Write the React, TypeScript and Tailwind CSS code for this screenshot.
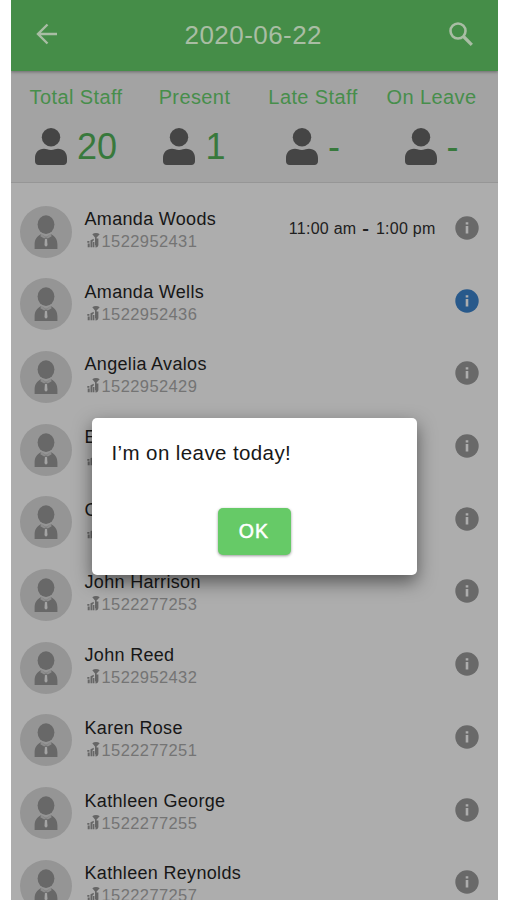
const stats = [
  { label: 'Total Staff', value: '20', cell: 'w-[131px]', gap: 'ml-[10px]' },
  { label: 'Present', value: '1', cell: 'w-[106px]', gap: 'ml-[10px]' },
  { label: 'Late Staff', value: '-', cell: 'w-[131px]', gap: 'ml-[10px]' },
  { label: 'On Leave', value: '-', cell: 'w-[106px]', gap: 'ml-[10px]' },
];

const staff = [
  { name: 'Amanda Woods', phone: '1522952431', time: true },
  { name: 'Amanda Wells', phone: '1522952436', active: true },
  { name: 'Angelia Avalos', phone: '1522952429' },
  { name: 'E', phone: '' },
  { name: 'C', phone: '' },
  { name: 'John Harrison', phone: '1522277253' },
  { name: 'John Reed', phone: '1522952432' },
  { name: 'Karen Rose', phone: '1522277251' },
  { name: 'Kathleen George', phone: '1522277255' },
  { name: 'Kathleen Reynolds', phone: '1522277257' },
];

function PersonIcon() {
  return (
    <svg width="32" height="37" viewBox="0 0 32 37" fill="#454545" className="shrink-0">
      <circle cx="16" cy="9.3" r="9.2" />
      <path d="M9 20.7C3.5 20.7 0 24.5 0 30v3.3C0 35.6 1.4 37 3.7 37h24.6c2.3 0 3.7-1.4 3.7-3.7V30c0-5.5-3.5-9.3-9-9.3-2.2 0-3.8 1.2-7 1.2s-4.8-1.2-7-1.2Z" />
    </svg>
  );
}

function Avatar() {
  return (
    <svg width="52" height="52" viewBox="0 0 52 52" className="shrink-0">
      <circle cx="26" cy="26" r="26" fill="#959595" />
      <ellipse cx="26" cy="18.6" rx="8.4" ry="9.3" fill="#686868" />
      <path d="M14.6 43v-4.5c0-5 2.4-8.200 6.400-10.200L26 31l5-2.700c4 2 6.400 5.200 6.400 10.200V43Z" fill="#686868" />
      <path d="m21.300 27.800 4.700 3.400 4.700-3.400 1 2.400-3.900 2.400-1.800-1.200-1.800 1.200-3.900-2.400Z" fill="#8d8d8d" />
      <path d="m24.900 33.200 1.100-.8 1.100.8.400 6-1.500 1.500-1.500-1.500Z" fill="#a4a4a4" />
    </svg>
  );
}

function DeviceIcon() {
  return (
    <svg width="13" height="16" viewBox="0 0 13 16" fill="#666" className="shrink-0">
      <path d="M5.300 1.200C7.300-.4 10.700-.4 12.700 1.200L9.600 4.400v1.100h1.800v6.300c0 1.600-1.100 2.600-2.900 2.800v-2L8 12V4.400Z" />
      <path d="M3.500 7.200 6.800 5.800v1.700l-1.300.7v6h-2ZM6 9h1.400v5.200H6ZM.3 8h2.100v1.700H.3ZM.7 10.600h2v3.600h-2Z" />
    </svg>
  );
}

function InfoIcon({ active }: { active?: boolean }) {
  return (
    <svg width="24" height="24" viewBox="0 0 24 24" className="shrink-0">
      <circle cx="12" cy="12" r="11.700" fill={active ? '#28598b' : '#696969'} />
      <path d="M10.700 6.200h2.600v2.200h-2.600ZM10.700 10h2.600v7.500h-2.600Z" fill="#adadad" />
    </svg>
  );
}

export default function App() {
  return (
    <div className="h-[900px] w-[507px] overflow-hidden bg-white pl-[10.500px] font-['Liberation_Sans',Arial,sans-serif]">
      <main className="relative h-[900px] w-[487px] overflow-hidden bg-[#adadad]">
        <header className="relative z-10 flex h-[71px] items-center bg-[#458d48] text-[#a9bda4] shadow-[0_1px_3px_rgba(0,0,0,0.35)]">
          <svg width="22" height="22" viewBox="0 0 22 22" fill="none" stroke="currentColor" strokeWidth="2.400" className="ml-[25px] -mt-[3px]">
            <path d="M21 11H2M11.500 1.500 2 11l9.500 9.500" />
          </svg>
          <h1 className="-mt-[2px] ml-[127px] w-[140px] whitespace-nowrap text-[26px] leading-[30px] tracking-[0.450px]">2020-06-22</h1>
          <svg width="24" height="24" viewBox="0 0 24 24" fill="none" stroke="currentColor" strokeWidth="2.600" className="ml-[124px] -mt-[3px]">
            <circle cx="9" cy="9" r="7.500" />
            <path d="m14.500 14.500 8.300 8.300" strokeWidth="3.200" />
          </svg>
        </header>
        <section className="flex h-[112px] border-b border-[#969696] bg-[#a3a3a3] pt-[14px]">
          {stats.map((s) => (
            <div key={s.label} className={`${s.cell} flex shrink-0 flex-col items-center`}>
              <div className="whitespace-nowrap text-[20px] leading-[25px] tracking-[0.400px] text-[#478e4b]">{s.label}</div>
              <div className="mt-[17px] flex h-[38px] items-center">
                <PersonIcon />
                <span className={`${s.gap} mt-[2px] whitespace-nowrap text-[36px] leading-[38px] text-[#38793c]`}>{s.value}</span>
              </div>
            </div>
          ))}
        </section>
        <ul className="pt-[12.200px]">
          {staff.map((p) => (
            <li key={p.name} className="flex h-[72.700px] items-center pl-[9px]">
              <Avatar />
              <div className="ml-[13px] -mt-[3px] whitespace-nowrap">
                <div className="text-[18px] leading-[22px] tracking-[0.320px] text-[#171717]">{p.name}</div>
                <div className="flex h-[22px] items-center pl-[2px] text-[16.500px] leading-[22px] tracking-[0.400px] text-[#747474]">
                  <DeviceIcon />
                  <span className="ml-[2px]">{p.phone}</span>
                </div>
              </div>
              <div className="ml-auto mr-[19px] -mt-[7px] flex items-center">
                {p.time && (
                  <span className="mr-[19px] mt-[2px] whitespace-nowrap text-[16px] leading-[20px] tracking-[0.250px] text-[#202020]">
                    11:00 am<span className="mx-[7px] inline-block scale-x-125 font-bold">-</span>1:00 pm
                  </span>
                )}
                <InfoIcon active={p.active} />
              </div>
            </li>
          ))}
        </ul>
        <div role="dialog" className="absolute left-[81px] top-[418px] z-20 flex h-[157px] w-[325px] flex-col items-center rounded-[5px] bg-white shadow-[0_7px_18px_rgba(0,0,0,0.5)]">
          <p className="w-full pl-[20px] pt-[22px] text-[20.500px] leading-[26px] tracking-[0.400px] text-[#181818]">I’m on leave today!</p>
          <button className="mt-[42px] h-[47px] w-[73px] rounded-[5px] bg-[#66ca67] text-[19.500px] tracking-[1.200px] text-white shadow-[0_1px_3px_rgba(0,0,0,0.4)] [-webkit-text-stroke:0.500px_white]">OK</button>
        </div>
      </main>
    </div>
  );
}
